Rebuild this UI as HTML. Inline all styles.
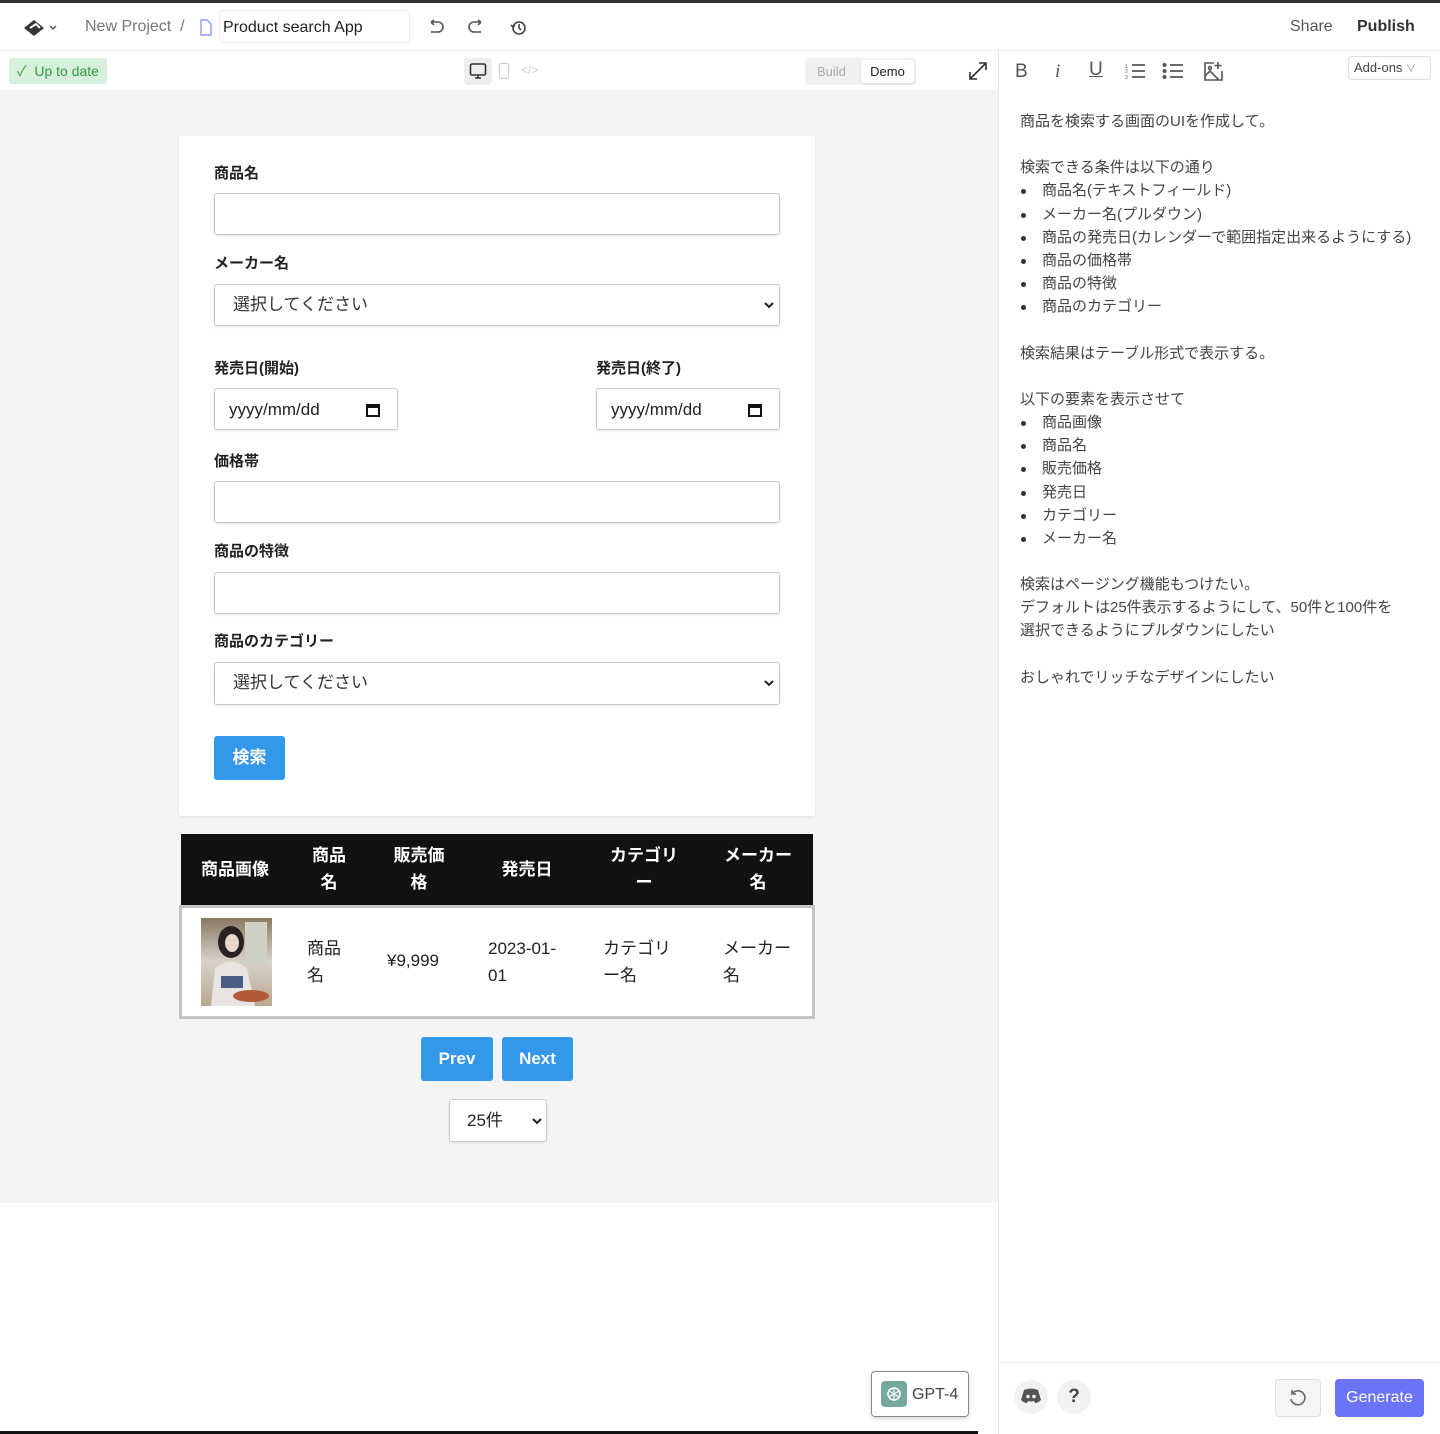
<!DOCTYPE html>
<html><head><meta charset="utf-8">
<style>
*{box-sizing:border-box;margin:0;padding:0}
body{width:1440px;height:1434px;position:relative;overflow:hidden;background:#fff;font-family:"Liberation Sans","Noto Sans CJK JP",sans-serif;color:#222}
.a{position:absolute}
.lbl{position:absolute;left:35px;font-size:15px;font-weight:bold;color:#222}
.inp{position:absolute;left:35px;width:566px;height:42px;border:1px solid #c8c8c8;border-radius:3px;background:#fff;box-shadow:0 1px 2px rgba(0,0,0,.1)}
.sel{font-size:17px;color:#333;padding-left:18px;line-height:40px}
.chev{position:absolute;right:4px;top:15px}
.date{width:184px;font-size:17px;padding-left:14px;line-height:42px;color:#222}
.rt{position:absolute;left:1020px;top:110px;font-size:15px;line-height:23.15px;color:#444;width:410px}
.rt li{list-style:none;position:relative;padding-left:22px}
.rt li:before{content:"";position:absolute;left:1px;top:10px;width:5px;height:5px;border-radius:50%;background:#333}
.btn{position:absolute;background:#3498ea;color:#fff;font-weight:bold;font-size:17px;border-radius:3px;text-align:center}
.ic{position:absolute;stroke:#555;fill:none;stroke-width:1.6}
</style></head><body>
<div class="a" style="left:0;top:0;width:1440px;height:3px;background:#333"></div>
<svg class="a" style="left:22px;top:18px" width="40" height="20" viewBox="0 0 40 20"><path d="M2 10 L12 2 L22 10 L12 18Z" fill="#333"/><path d="M8 10 L14 6 L18 10" stroke="#fff" stroke-width="2" fill="none"/><path d="M28 8l3 3 3-3" stroke="#555" stroke-width="1.4" fill="none"/></svg>
<div class="a" style="left:85px;top:18px;font-size:16px;color:#777">New Project&nbsp; /</div>
<svg class="a" style="left:199px;top:19px" width="14" height="17" viewBox="0 0 14 17"><path d="M2 1h6l4 4v11H2z" stroke="#8e9cf5" stroke-width="1.4" fill="none"/></svg>
<div class="a" style="left:219px;top:10px;width:191px;height:33px;border:1px solid #eee;border-radius:4px;font-size:16px;line-height:33px;padding-left:3px;color:#222">Product search App</div>
<svg class="ic" style="left:427px;top:19px" width="18" height="16" viewBox="0 0 18 16"><path d="M4 3H11a5 5 0 010 10H4M4 3l3-2M4 3l3 3"/></svg>
<svg class="ic" style="left:467px;top:19px" width="18" height="16" viewBox="0 0 18 16"><path d="M14 3H7a5 5 0 000 10h7M14 3l-3-2M14 3l-3 3"/></svg>
<svg class="ic" style="left:510px;top:19px;stroke:#444" width="17" height="17" viewBox="0 0 17 17"><circle cx="9" cy="9" r="6"/><path d="M9 5v4l2 2M1 6l2 2 2-2"/></svg>
<div class="a" style="left:1290px;top:18px;font-size:16px;color:#555">Share</div>
<div class="a" style="left:1357px;top:18px;font-size:16px;font-weight:bold;color:#333">Publish</div>
<div class="a" style="left:0;top:50px;width:1440px;height:1px;background:#eee"></div>
<div class="a" style="left:9px;top:58px;width:98px;height:26px;background:#d7f0dc;border-radius:3px;font-size:14px;color:#2f9a45;line-height:26px;padding-left:8px">✓&nbsp; Up to date</div>
<div class="a" style="left:464px;top:58px;width:28px;height:27px;background:#eee;border-radius:4px"></div>
<svg class="a" style="left:469px;top:62px" width="18" height="18" viewBox="0 0 18 18"><rect x="1.5" y="2" width="15" height="11" rx="1.5" stroke="#333" stroke-width="1.6" fill="none"/><path d="M9 13v3M6 16h6" stroke="#333" stroke-width="1.6"/></svg>
<svg class="a" style="left:498px;top:62px" width="12" height="18" viewBox="0 0 12 18"><rect x="1.5" y="1.5" width="9" height="15" rx="2" stroke="#ccc" stroke-width="1.2" fill="none"/></svg>
<div class="a" style="left:521px;top:63px;font-size:12px;color:#ccc">&lt;/&gt;</div>
<div class="a" style="left:805px;top:58px;width:111px;height:27px;background:#f0f0f0;border-radius:4px"></div>
<div class="a" style="left:817px;top:64px;font-size:13px;color:#aaa">Build</div>
<div class="a" style="left:861px;top:60px;width:53px;height:23px;background:#fff;border-radius:3px;font-size:13px;line-height:23px;text-align:center;color:#222;box-shadow:0 1px 2px rgba(0,0,0,.1)">Demo</div>
<svg class="ic" style="left:968px;top:61px;stroke:#333" width="20" height="20" viewBox="0 0 20 20"><path d="M2 18L18 2M11 2h7v7M2 11v7h7"/></svg>
<div class="a" style="left:1015px;top:61px;font-size:19px;color:#555">B</div>
<div class="a" style="left:1055px;top:61px;font-size:19px;color:#555;font-style:italic;font-family:'Liberation Serif',serif">i</div>
<div class="a" style="left:1089px;top:59px;font-size:19px;color:#555;text-decoration:underline">U</div>
<svg class="ic" style="left:1124px;top:62px" width="22" height="18" viewBox="0 0 22 18"><path d="M8 3h13M8 9h13M8 15h13" stroke-width="1.8"/><text x="1" y="6" font-size="5" fill="#555" stroke="none">1</text><text x="1" y="11" font-size="5" fill="#555" stroke="none">2</text><text x="1" y="17" font-size="5" fill="#555" stroke="none">3</text></svg>
<svg class="ic" style="left:1162px;top:62px" width="22" height="18" viewBox="0 0 22 18"><path d="M8 3h13M8 9h13M8 15h13" stroke-width="1.8"/><circle cx="2.5" cy="3" r="1.2" fill="#555"/><circle cx="2.5" cy="9" r="1.2" fill="#555"/><circle cx="2.5" cy="15" r="1.2" fill="#555"/></svg>
<svg class="ic" style="left:1202px;top:60px" width="22" height="22" viewBox="0 0 22 22"><path d="M12 3H3v17h17v-9M3 16l5-5 9 9M16 2v7M12.5 5.5h7"/><circle cx="8" cy="8" r="1.5"/></svg>
<div class="a" style="left:1348px;top:56px;width:83px;height:24px;border:1px solid #ddd;border-radius:4px;font-size:13px;color:#444;line-height:22px;padding-left:5px">Add-ons <span style="font-size:10px;color:#888">∨</span></div>
<div class="a" style="left:0;top:90px;width:998px;height:1px;background:#eee"></div>
<div class="a" style="left:0;top:91px;width:998px;height:1112px;background:#f4f4f4"></div>
<div class="a" style="left:998px;top:50px;width:1px;height:1384px;background:#e8e8e8"></div>
<div class="a" style="left:179px;top:136px;width:636px;height:680px;background:#fff;border-radius:3px;box-shadow:0 1px 3px rgba(0,0,0,.08)">
 <div class="lbl" style="top:26px">商品名</div>
 <div class="inp" style="top:57px"></div>
 <div class="lbl" style="top:116px">メーカー名</div>
 <div class="inp sel" style="top:148px">選択してください<svg class="chev" width="12" height="10" viewBox="0 0 12 10"><path d="M2 3l4 4 4-4" stroke="#222" stroke-width="2" fill="none"/></svg></div>
 <div class="lbl" style="top:221px">発売日(開始)</div>
 <div class="lbl" style="top:221px;left:417px">発売日(終了)</div>
 <div class="inp date" style="top:252px">yyyy/mm/dd<svg class="a" style="right:16px;top:13px" width="16" height="16" viewBox="0 0 16 16"><rect x="2" y="3" width="12" height="11" stroke="#111" stroke-width="2" fill="none"/><rect x="2" y="3" width="12" height="3" fill="#111"/></svg></div>
 <div class="inp date" style="top:252px;left:417px;width:184px">yyyy/mm/dd<svg class="a" style="right:16px;top:13px" width="16" height="16" viewBox="0 0 16 16"><rect x="2" y="3" width="12" height="11" stroke="#111" stroke-width="2" fill="none"/><rect x="2" y="3" width="12" height="3" fill="#111"/></svg></div>
 <div class="lbl" style="top:314px">価格帯</div>
 <div class="inp" style="top:345px"></div>
 <div class="lbl" style="top:404px">商品の特徴</div>
 <div class="inp" style="top:436px"></div>
 <div class="lbl" style="top:494px">商品のカテゴリー</div>
 <div class="inp sel" style="top:526px;height:43px">選択してください<svg class="chev" width="12" height="10" viewBox="0 0 12 10"><path d="M2 3l4 4 4-4" stroke="#222" stroke-width="2" fill="none"/></svg></div>
 <div class="btn" style="left:35px;top:600px;width:71px;height:44px;line-height:44px">検索</div>
</div>
<div class="a" style="left:181px;top:834px;width:632px;height:72px;background:#111;color:#fff;font-weight:bold;font-size:17px">
 <div class="a" style="left:0;width:108px;top:21px;text-align:center">商品画像</div>
 <div class="a" style="left:108px;width:80px;top:8px;text-align:center;line-height:27px">商品<br>名</div>
 <div class="a" style="left:188px;width:100px;top:8px;text-align:center;line-height:27px">販売価<br>格</div>
 <div class="a" style="left:288px;width:116px;top:21px;text-align:center">発売日</div>
 <div class="a" style="left:404px;width:118px;top:8px;text-align:center;line-height:27px">カテゴリ<br>ー</div>
 <div class="a" style="left:522px;width:110px;top:8px;text-align:center;line-height:27px">メーカー<br>名</div>
</div>
<div class="a" style="left:179px;top:905px;width:636px;height:114px;background:#fff;border:3px solid #c4c4c4;font-size:17px;color:#222">
 <svg class="a" style="left:19px;top:10px" width="71" height="88" viewBox="0 0 71 88"><defs><linearGradient id="g" x1="0" y1="0" x2="0" y2="1"><stop offset="0" stop-color="#8a7a66"/><stop offset=".5" stop-color="#d8d2c8"/><stop offset="1" stop-color="#b9a791"/></linearGradient></defs><rect width="71" height="88" fill="url(#g)"/><rect x="44" y="4" width="22" height="44" fill="#cfcfc4"/><ellipse cx="30" cy="24" rx="13" ry="16" fill="#2a2222"/><ellipse cx="31" cy="25" rx="7" ry="9" fill="#ead6c8"/><path d="M10 88 L14 50 Q30 38 46 50 L54 88Z" fill="#e8e4e2"/><rect x="20" y="58" width="22" height="12" fill="#4b5d86"/><ellipse cx="50" cy="78" rx="18" ry="6" fill="#b35a3a"/></svg>
 <div class="a" style="left:125px;top:27px;line-height:27px">商品<br>名</div>
 <div class="a" style="left:205px;top:43px">¥9,999</div>
 <div class="a" style="left:306px;top:27px;line-height:27px">2023-01-<br>01</div>
 <div class="a" style="left:421px;top:27px;line-height:27px">カテゴリ<br>ー名</div>
 <div class="a" style="left:541px;top:27px;line-height:27px">メーカー<br>名</div>
</div>
<div class="btn" style="left:421px;top:1037px;width:72px;height:44px;line-height:44px">Prev</div>
<div class="btn" style="left:502px;top:1037px;width:71px;height:44px;line-height:44px">Next</div>
<div class="a" style="left:449px;top:1099px;width:98px;height:43px;background:#fff;border:1px solid #ccc;border-radius:3px;font-size:17px;line-height:41px;padding-left:17px;box-shadow:0 1px 2px rgba(0,0,0,.1)">25件<svg class="a" style="right:3px;top:16px" width="12" height="10" viewBox="0 0 12 10"><path d="M2 3l4 4 4-4" stroke="#222" stroke-width="2" fill="none"/></svg></div>
<div class="a" style="left:871px;top:1371px;width:98px;height:46px;border:1.5px solid #888;border-radius:4px;background:#fff;box-shadow:0 2px 4px rgba(0,0,0,.15)"></div>
<div class="a" style="left:881px;top:1381px;width:26px;height:26px;background:#74aa9c;border-radius:4px"></div>
<svg class="a" style="left:884px;top:1384px" width="20" height="20" viewBox="0 0 20 20"><circle cx="10" cy="10" r="6" stroke="#fff" stroke-width="1.6" fill="none"/><path d="M10 4v12M5 7l10 6M5 13l10-6" stroke="#fff" stroke-width="1.2"/></svg>
<div class="a" style="left:912px;top:1386px;font-size:16px;color:#444">GPT-4</div>
<div class="a" style="left:0;top:1431px;width:978px;height:3px;background:#111"></div>
<div class="rt">
<div>商品を検索する画面のUIを作成して。</div><div>&nbsp;</div>
<div>検索できる条件は以下の通り</div>
<ul><li>商品名(テキストフィールド)</li><li>メーカー名(プルダウン)</li><li>商品の発売日(カレンダーで範囲指定出来るようにする)</li><li>商品の価格帯</li><li>商品の特徴</li><li>商品のカテゴリー</li></ul>
<div>&nbsp;</div><div>検索結果はテーブル形式で表示する。</div><div>&nbsp;</div>
<div>以下の要素を表示させて</div>
<ul><li>商品画像</li><li>商品名</li><li>販売価格</li><li>発売日</li><li>カテゴリー</li><li>メーカー名</li></ul>
<div>&nbsp;</div><div>検索はページング機能もつけたい。</div>
<div>デフォルトは25件表示するようにして、50件と100件を</div><div>選択できるようにプルダウンにしたい</div>
<div>&nbsp;</div><div>おしゃれでリッチなデザインにしたい</div>
</div>
<div class="a" style="left:999px;top:1362px;width:441px;height:1px;background:#eee"></div>
<div class="a" style="left:1014px;top:1380px;width:34px;height:34px;border-radius:50%;background:#f2f2f2"></div>
<svg class="a" style="left:1020px;top:1387px" width="22" height="18" viewBox="0 0 22 18"><path d="M4 3Q11 0 18 3L21 13Q18 16 15 16L14 14Q11 15 8 14L7 16Q4 16 1 13Z" fill="#555"/><circle cx="8" cy="9.5" r="1.8" fill="#f2f2f2"/><circle cx="14" cy="9.5" r="1.8" fill="#f2f2f2"/></svg>
<div class="a" style="left:1057px;top:1380px;width:34px;height:34px;border-radius:50%;background:#f2f2f2;text-align:center;line-height:34px;font-size:19px;font-weight:bold;color:#444">?</div>
<div class="a" style="left:1275px;top:1379px;width:46px;height:38px;border:1px solid #ddd;border-radius:4px;background:#f5f5f5"></div>
<svg class="ic" style="left:1288px;top:1388px;stroke:#666" width="20" height="20" viewBox="0 0 20 20"><path d="M4 6A7 7 0 1 1 3 11M4 2v4h4"/></svg>
<div class="a" style="left:1335px;top:1379px;width:89px;height:38px;background:#6b74f7;border-radius:4px;color:#fff;font-size:16px;line-height:38px;text-align:center">Generate</div>
</body></html>
